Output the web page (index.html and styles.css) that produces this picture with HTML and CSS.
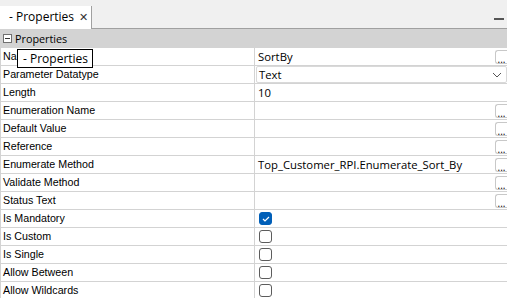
FILE: index.html
```html
<!DOCTYPE html>
<html>
<head>
    <title>Properties</title>
    <link rel="stylesheet" href="styles.css">
</head>
<body>
    <div class="tabstrip">
        <div class="tab">- Properties <span class="close">&#x2715;</span></div>
        <div class="tab-fill"><span class="minimize"></span></div>
    </div>
    <div class="grid">
        <div class="category"><span class="toggle"></span>Properties</div>

        <div class="row"><div class="name">Name</div><div class="value">SortBy<span class="dots">...</span></div></div>
        <div class="row"><div class="name">Parameter Datatype</div><div class="value combo">Text<svg class="chev" width="10" height="6" viewBox="0 0 10 6"><path d="M1 1 L5 5 L9 1" fill="none" stroke="#555" stroke-width="1"/></svg></div></div>
        <div class="row"><div class="name">Length</div><div class="value">10</div></div>
        <div class="row"><div class="name">Enumeration Name</div><div class="value"><span class="dots">...</span></div></div>
        <div class="row"><div class="name">Default Value</div><div class="value"><span class="dots">...</span></div></div>
        <div class="row"><div class="name">Reference</div><div class="value"><span class="dots">...</span></div></div>
        <div class="row"><div class="name">Enumerate Method</div><div class="value">Top_Customer_RPI.Enumerate_Sort_By<span class="dots">...</span></div></div>
        <div class="row"><div class="name">Validate Method</div><div class="value"><span class="dots">...</span></div></div>
        <div class="row"><div class="name">Status Text</div><div class="value"><span class="dots">...</span></div></div>
        <div class="row"><div class="name">Is Mandatory</div><div class="value"><span class="check on"><svg width="8" height="6" viewBox="0 0 8 6"><path d="M1 3 L3 5 L7 1" fill="none" stroke="#fff" stroke-width="1.2"/></svg></span></div></div>
        <div class="row"><div class="name">Is Custom</div><div class="value"><span class="check"></span></div></div>
        <div class="row"><div class="name">Is Single</div><div class="value"><span class="check"></span></div></div>
        <div class="row"><div class="name">Allow Between</div><div class="value"><span class="check"></span></div></div>
        <div class="row"><div class="name">Allow Wildcards</div><div class="value"><span class="check"></span></div></div>

        <div class="tooltip">- Properties</div>
    </div>
</body>
</html>
```

FILE: styles.css
```css
body {
    margin: 0;
    background-color: #fff;
    font-family: "Liberation Sans", Arial, sans-serif;
    overflow: hidden;
}
.tabstrip {
    display: flex;
    align-items: flex-end;
    height: 29px;
    background-color: #f0f0f0;
}
.tab {
    width: 92px;
    height: 23px;
    padding-left: 9px;
    background-color: #fff;
    border-right: 1px solid #a0a0a0;
    font-family: "Open Sans", sans-serif;
    font-size: 12px;
    line-height: 22px;
    color: #000;
    box-sizing: border-box;
}
.close {
    font-size: 11px;
    color: #333;
    margin-left: 2px;
}
.tab-fill {
    flex: 1;
    height: 100%;
    border-bottom: 1px solid #a0a0a0;
    display: flex;
    justify-content: flex-end;
    align-items: flex-end;
    box-sizing: border-box;
}
.minimize {
    width: 10px;
    height: 2px;
    background-color: #555;
    margin: 0 3px 8px 0;
}
.grid {
    position: relative;
}
.category {
    display: flex;
    align-items: center;
    height: 19px;
    background-color: #d3d3d3;
    font-family: "Open Sans", sans-serif;
    font-size: 10.8px;
    color: #000;
    box-sizing: border-box;
    padding-bottom: 1px;
}
.toggle {
    position: relative;
    width: 7px;
    height: 7px;
    border: 1px solid #707070;
    background-color: #fff;
    margin: 0 3px 0 3px;
}
.toggle::after {
    content: "";
    position: absolute;
    left: 1px;
    top: 3px;
    width: 5px;
    height: 1px;
    background-color: #333;
}
.row {
    display: grid;
    grid-template-columns: 255px 1fr;
    height: 18px;
    border-bottom: 1px solid #d3d3d3;
    box-sizing: border-box;
}
.name {
    border-left: 1px solid #d3d3d3;
    border-right: 1px solid #d3d3d3;
    padding-left: 2px;
    font-size: 10.7px;
    line-height: 17px;
    color: #000;
    white-space: nowrap;
}
.value {
    display: flex;
    align-items: center;
    padding-left: 3px;
    font-family: "Open Sans", sans-serif;
    font-size: 11.3px;
    color: #000;
    white-space: nowrap;
}
.combo {
    border: 1px solid #d9d9d9;
    border-radius: 2px;
    margin: 0 0 0 1px;
    padding-left: 2px;
}
.chev {
    margin-left: auto;
    margin-right: 4px;
}
.dots {
    margin-left: auto;
    width: 12px;
    height: 14px;
    border: 1px solid #c8c8c8;
    border-right: none;
    border-radius: 3px 0 0 3px;
    font-size: 10px;
    line-height: 17px;
    text-align: center;
    box-sizing: border-box;
    color: #000;
}
.check {
    display: flex;
    align-items: center;
    justify-content: center;
    width: 13px;
    height: 13px;
    margin-left: 1px;
    border: 1px solid #5c5c5c;
    border-radius: 3px;
    box-sizing: border-box;
    background-color: #fff;
}
.check.on {
    background-color: #005fb8;
    border-color: #005fb8;
}
.tooltip {
    position: absolute;
    left: 17px;
    top: 20px;
    height: 19px;
    padding: 0 4px 0 5px;
    border: 1px solid #000;
    background-color: #fff;
    font-family: "Open Sans", sans-serif;
    font-size: 12px;
    line-height: 18px;
    box-sizing: border-box;
}
```
